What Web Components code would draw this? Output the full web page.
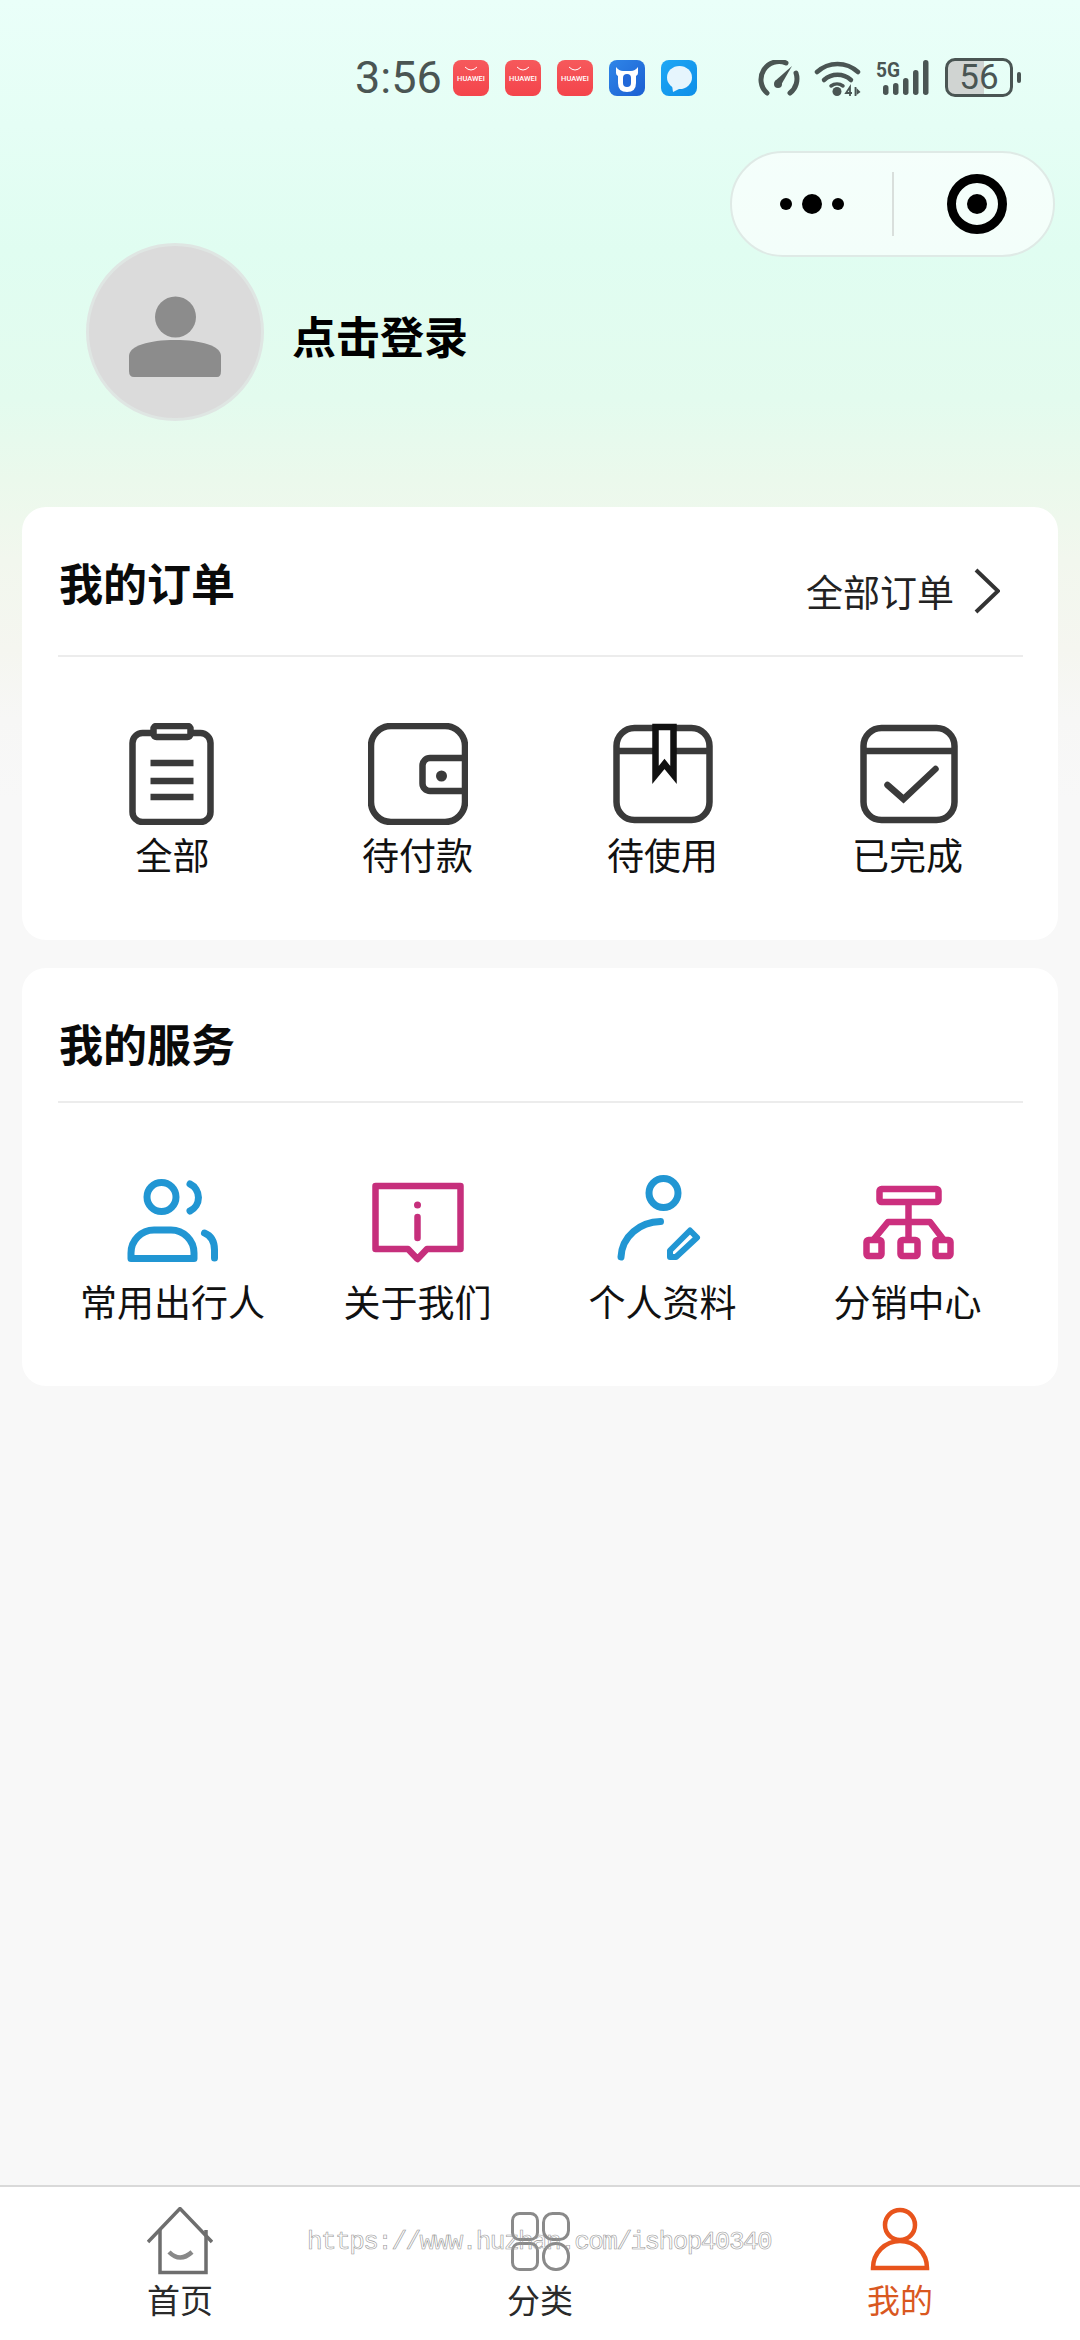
<!DOCTYPE html>
<html lang="zh">
<head>
<meta charset="utf-8">
<title>我的</title>
<style>
  html, body { margin: 0; padding: 0; }
  body {
    width: 1080px;
    height: 2340px;
    overflow: hidden;
    font-family: "Noto Sans CJK SC", "Noto Sans", sans-serif;
    color: #111;
    background: linear-gradient(180deg, #eafff9 0, #e0fdf1 250px, #e3fbee 400px, #ebf9ec 480px, #f2f7ee 560px, #f5f6f0 650px, #f7f7f6 720px, #f8f8f8 800px);
  }
</style>
</head>
<body>
<app-shell>
  <status-bar></status-bar>
  <nav-row></nav-row>
  <user-head>点击登录</user-head>

  <panel-card style="--head-h:150px;--card-h:433px;--pad-top:66px;--icon-h:102px;--label-gap:7px;margin-bottom:28px">
    <span slot="title">我的订单</span>
    <more-link slot="action">全部订单</more-link>
    <grid-item label="全部">
      <svg width="100" height="102" viewBox="0 0 100 102" fill="none" stroke="#3a3a3a" stroke-width="6.500">
        <rect x="9.500" y="10" width="78" height="89" rx="10"/>
        <rect x="30.500" y="3" width="37" height="11" rx="3" fill="#fff"/>
        <path d="M27.500 40h43M27.500 58h43M27.500 74h43"/>
      </svg>
    </grid-item>
    <grid-item label="待付款">
      <svg width="100" height="102" viewBox="0 0 100 102" fill="none" stroke="#3a3a3a" stroke-width="6.500">
        <rect x="3" y="3" width="94" height="96" rx="20"/>
        <path d="M97 35H62a7.500 7.500 0 0 0-7.500 7.500v18a7.500 7.500 0 0 0 7.500 7.500H97"/>
        <circle cx="73.500" cy="53" r="5.500" fill="#3a3a3a" stroke="none"/>
      </svg>
    </grid-item>
    <grid-item label="待使用">
      <svg width="100" height="102" viewBox="0 0 100 102" fill="none" stroke="#3a3a3a" stroke-width="6.500">
        <rect x="3.500" y="5" width="93" height="92" rx="18"/>
        <path d="M4 28h92"/>
        <path d="M42.500 4v48l9-11 9 11V4z" fill="#fff" stroke="#111"/>
      </svg>
    </grid-item>
    <grid-item label="已完成">
      <svg width="100" height="102" viewBox="0 0 100 102" fill="none" stroke="#3a3a3a" stroke-width="6.500">
        <rect x="5.500" y="5" width="91" height="92" rx="18"/>
        <path d="M6 28h90"/>
        <path d="M29.500 62l16 14 32-30" stroke-linecap="round"/>
      </svg>
    </grid-item>
  </panel-card>

  <panel-card style="--head-h:135px;--card-h:418px;--pad-top:72px;--icon-h:90px;--label-gap:14px">
    <span slot="title">我的服务</span>
    <grid-item label="常用出行人">
      <svg width="100" height="90" viewBox="0 0 100 90" fill="none" stroke="#2196d3" stroke-width="7" stroke-linecap="round" stroke-linejoin="round">
        <circle cx="38.500" cy="22" r="14.500"/>
        <path d="M67 9a15 15 0 0 1 0 27"/>
        <path d="M8 83.500V78a23 23 0 0 1 23-23h17a23 23 0 0 1 23 23v5.500z"/>
        <path d="M81.500 58q10 4 10 17v8"/>
      </svg>
    </grid-item>
    <grid-item label="关于我们">
      <svg width="100" height="90" viewBox="0 0 100 90" fill="none" stroke="#c62f7c" stroke-width="6.500" stroke-linejoin="round">
        <path d="M7.500 11h85v63H59l-9.500 10L40 74H7.500z"/>
        <circle cx="49.500" cy="30" r="3.500" fill="#c62f7c" stroke="none"/>
        <path d="M49.500 42v21" stroke-linecap="round"/>
      </svg>
    </grid-item>
    <grid-item label="个人资料">
      <svg width="100" height="90" viewBox="0 0 100 90" fill="none" stroke="#2196d3" stroke-width="7" stroke-linecap="round" stroke-linejoin="round">
        <circle cx="50.500" cy="18" r="14.500"/>
        <path d="M47.500 46.500C27 47 9 61 8 82"/>
        <path d="M77 55.500l7 7L63 82h-6v-6.500z" stroke-width="6"/>
      </svg>
    </grid-item>
    <grid-item label="分销中心">
      <svg width="100" height="90" viewBox="0 0 100 90" fill="none" stroke="#cc2f7e" stroke-width="6.500" stroke-linejoin="round">
        <rect x="21.500" y="14" width="59" height="13" rx="2"/>
        <path d="M50.500 30v32"/>
        <path d="M16 64l14-17h42l13 17"/>
        <rect x="8.500" y="65" width="15" height="16" rx="2"/>
        <rect x="42.500" y="65" width="17" height="16" rx="2"/>
        <rect x="77.500" y="65" width="15" height="16" rx="2"/>
      </svg>
    </grid-item>
  </panel-card>

  <tab-bar slot="tabs">
    <tab-item label="首页">
      <svg width="66" height="68" viewBox="0 0 66 68" fill="none" stroke="#6e6e6e" stroke-width="3.500">
        <path d="M1 35L33 1.500 65 35"/>
        <path d="M13 23v42.500h46V23"/>
        <path d="M22 45q11 11 23 0" stroke="#888" stroke-width="4.500"/>
      </svg>
    </tab-item>
    <tab-item label="分类">
      <svg width="66" height="68" viewBox="0 0 66 68" fill="none" stroke="#8a8a8a" stroke-width="3">
        <rect x="5.500" y="6.500" width="25" height="26" rx="7"/>
        <rect x="36.500" y="6.500" width="25" height="26" rx="9"/>
        <rect x="5.500" y="36.500" width="25" height="26" rx="7"/>
        <rect x="36.500" y="36.500" width="25" height="26" rx="12"/>
      </svg>
    </tab-item>
    <tab-item label="我的" active>
      <svg width="66" height="68" viewBox="0 0 66 68" fill="none" stroke="#e8541c" stroke-width="4.500">
        <circle cx="33" cy="18" r="15"/>
        <path d="M6 61a27 27 0 0 1 54 0z"/>
      </svg>
    </tab-item>
  </tab-bar>
</app-shell>

<script>
class AppShell extends HTMLElement {
  constructor() {
    super();
    this.attachShadow({ mode: "open" }).innerHTML = `
      <style>
        :host { display: flex; flex-direction: column; height: 2340px; }
        .body { flex: 1; }
      </style>
      <div class="body"><slot></slot></div>
      <slot name="tabs"></slot>
    `;
  }
}

class StatusBar extends HTMLElement {
  constructor() {
    super();
    const huawei = `
      <div class="app red">
        <svg width="36" height="13" viewBox="0 0 36 13" fill="none" stroke="#fff" stroke-width="1"><path d="M12 7q6 6 12 0"/></svg>
        <span>HUAWEI</span>
      </div>`;
    this.attachShadow({ mode: "open" }).innerHTML = `
      <style>
        :host {
          display: flex; align-items: center; height: 39px;
          padding: 58px 0 0 355px; color: #4a5553;
        }
        .time { font: 400 45px/39px Roboto, sans-serif; width: 98px; }
        .apps { display: flex; gap: 16px; width: 305px; }
        .app {
          width: 36px; height: 36px; border-radius: 8px;
          display: flex; flex-direction: column; align-items: center;
        }
        .app svg { display: block; flex: none; }
        .red { background: linear-gradient(180deg, #f6595c, #f4444b); color: #fff; }
        .red span { font: 500 7.500px/12px Roboto, sans-serif; white-space: nowrap; }
        .blue { background: linear-gradient(135deg, #2f86e8, #1b5fd2); }
        .sky { background: linear-gradient(135deg, #1ea7f5, #0e8ee8); }
        .sys { display: flex; align-items: center; }
        svg { display: block; }
        .battery {
          width: 62px; height: 33px; border: 3px solid #4a5553; border-radius: 10px;
          margin-left: 16px; text-align: center;
          font: 400 35px/33px Roboto, sans-serif;
          background: linear-gradient(90deg, #d0d4d2 58%, transparent 58%);
        }
        .tip { width: 4px; height: 11px; border-radius: 2px; background: #4a5553; margin-left: 4px; }
      </style>
      <div class="time">3:56</div>
      <div class="apps">
        ${huawei}${huawei}${huawei}
        <div class="app blue">
          <svg width="36" height="36" viewBox="0 0 36 36">
            <path d="M7 7q3 4 7 4h8q4 0 7-4v6q0 2-2 3v7q0 9-9 9t-9-9v-7q-2-1-2-3z" fill="#fff"/>
            <rect x="14" y="14" width="8" height="13" rx="4" fill="#2268d8"/>
          </svg>
        </div>
        <div class="app sky">
          <svg width="36" height="36" viewBox="0 0 36 36">
            <ellipse cx="18.500" cy="17.500" rx="12.500" ry="11.500" fill="#e6f5fd"/>
            <path d="M11 25l1 7 8-4z" fill="#e6f5fd"/>
          </svg>
        </div>
      </div>
      <div class="sys">
        <svg width="42" height="36" viewBox="0 0 42 36" fill="none" stroke="#4a5553" stroke-width="5" stroke-linecap="round">
          <path d="M9 33A18 18 0 0 1 28 3"/>
          <path d="M38 13a18 18 0 0 1-6 20"/>
          <path d="M34 6L23 25l-6-4z" fill="#4a5553" stroke="none"/>
          <circle cx="20" cy="24" r="4" fill="#4a5553" stroke="none"/>
        </svg>
        <svg style="margin-left:14px" width="47" height="36" viewBox="0 0 47 36" fill="none" stroke="#4a5553" stroke-width="4.500" stroke-linecap="round">
          <path d="M3 12a30 30 0 0 1 41 0"/>
          <path d="M10 20a20 20 0 0 1 27 0"/>
          <path d="M17 26a10 10 0 0 1 12 0" stroke-width="3.500"/>
          <circle cx="23" cy="31.500" r="4.500" fill="#4a5553" stroke="none"/>
          <path d="M36 36v-9l-4 6h6" stroke-width="1.800" stroke-linecap="butt"/>
          <path d="M41.500 27v9" stroke-width="1.800" stroke-linecap="butt"/>
          <path d="M42.500 28l4 4-4 3z" fill="#4a5553" stroke="none"/>
        </svg>
        <svg style="margin-left:14px" width="54" height="37" viewBox="0 0 54 37">
          <text x="1" y="18" font-family="Roboto, sans-serif" font-size="21" font-weight="700" textLength="24" lengthAdjust="spacingAndGlyphs" fill="#4a5553">5G</text>
          <g fill="#4a5553">
            <rect x="8" y="26" width="5.500" height="10" rx="2.700"/>
            <rect x="18" y="24" width="5.500" height="12" rx="2.700"/>
            <rect x="28" y="19" width="5.500" height="17" rx="2.700"/>
            <rect x="38" y="11" width="5.500" height="25" rx="2.700"/>
            <rect x="48" y="1" width="5.500" height="35" rx="2.700"/>
          </g>
        </svg>
        <div class="battery">56</div>
        <div class="tip"></div>
      </div>
    `;
  }
}

class NavRow extends HTMLElement {
  constructor() {
    super();
    this.attachShadow({ mode: "open" }).innerHTML = `
      <style>
        :host { display: flex; justify-content: flex-end; height: 92px; padding: 54px 25px 0 0; }
        .pill {
          box-sizing: border-box; width: 325px; height: 106px; border-radius: 53px;
          background: rgba(255, 255, 255, .62); border: 2px solid #dfeae6;
          display: flex; align-items: center;
        }
        .dots { width: 160px; display: flex; justify-content: center; align-items: center; gap: 10px; }
        .dots i { display: block; width: 12px; height: 12px; border-radius: 50%; background: #000; }
        .dots i.big { width: 20px; height: 20px; }
        .line { width: 2px; height: 64px; background: #d9dfdc; }
        .target { flex: 1; display: flex; justify-content: center; padding-left: 6px; }
        svg { display: block; }
      </style>
      <div class="pill">
        <div class="dots"><i></i><i class="big"></i><i></i></div>
        <div class="line"></div>
        <div class="target">
          <svg width="60" height="60" viewBox="0 0 60 60">
            <circle cx="30" cy="30" r="25.500" fill="none" stroke="#000" stroke-width="9"/>
            <circle cx="30" cy="30" r="10" fill="#000"/>
          </svg>
        </div>
      </div>
    `;
  }
}

class UserHead extends HTMLElement {
  constructor() {
    super();
    this.attachShadow({ mode: "open" }).innerHTML = `
      <style>
        :host { display: flex; align-items: center; gap: 28px; padding: 0 0 86px 86px; }
        .avatar { display: block; flex: none; }
        .name { font-size: 44px; line-height: 60px; font-weight: 700; color: #000; margin-top: 5px; }
      </style>
      <svg class="avatar" width="178" height="178" viewBox="0 0 178 178">
        <circle cx="89" cy="89" r="87.500" fill="#dbdbdb" stroke="#dfe6e3" stroke-width="3"/>
        <circle cx="89.500" cy="74" r="20.500" fill="#8c8c8c"/>
        <path d="M43 128q0 6 5 6h83q4 0 4-6v-15c0-10-20-16-46-16s-46 6-46 16z" fill="#8c8c8c"/>
      </svg>
      <div class="name"><slot></slot></div>
    `;
  }
}

class PanelCard extends HTMLElement {
  constructor() {
    super();
    this.attachShadow({ mode: "open" }).innerHTML = `
      <style>
        :host {
          display: block; box-sizing: border-box; height: var(--card-h);
          margin: 0 22px; background: #fff; border-radius: 24px;
        }
        .head {
          box-sizing: border-box; height: var(--head-h); margin: 0 35px 0 36px;
          padding: 45px 23px 0 1px; border-bottom: 2px solid #ececec;
          display: flex; justify-content: space-between; align-items: flex-start;
        }
        .title { font-size: 44px; line-height: 60px; font-weight: 700; color: #0a0a0a; }
        .grid {
          display: grid; grid-template-columns: repeat(4, 245px);
          padding: var(--pad-top) 28px 0;
        }
      </style>
      <div class="head">
        <div class="title"><slot name="title"></slot></div>
        <slot name="action"></slot>
      </div>
      <div class="grid"><slot></slot></div>
    `;
  }
}

class MoreLink extends HTMLElement {
  constructor() {
    super();
    this.attachShadow({ mode: "open" }).innerHTML = `
      <style>
        :host { display: flex; align-items: center; gap: 20px; margin-top: 14px; font-size: 37px; line-height: 50px; color: #222; }
        svg { display: block; }
      </style>
      <span><slot></slot></span>
      <svg width="26" height="46" viewBox="0 0 26 46" fill="none" stroke="#333" stroke-width="4">
        <path d="M2 2l22 21L2 44"/>
      </svg>
    `;
  }
}

class GridItem extends HTMLElement {
  constructor() {
    super();
    this.attachShadow({ mode: "open" }).innerHTML = `
      <style>
        :host { display: flex; flex-direction: column; align-items: center; }
        .icon { height: var(--icon-h); }
        .label { margin-top: var(--label-gap); font-size: 37px; line-height: 44px; color: #111; white-space: nowrap; }
      </style>
      <div class="icon"><slot></slot></div>
      <div class="label"></div>
    `;
    this.shadowRoot.querySelector(".label").textContent = this.getAttribute("label");
  }
}

class TabBar extends HTMLElement {
  constructor() {
    super();
    this.attachShadow({ mode: "open" }).innerHTML = `
      <style>
        :host {
          display: grid; grid-template-columns: repeat(3, 360px); position: relative;
          box-sizing: border-box; height: 155px; background: #fff;
          border-top: 2px solid #d9d9d9; padding-top: 20px;
        }
        .mark {
          position: absolute; left: 307px; top: 37px;
          font: 26px/36px "Liberation Mono", monospace; letter-spacing: -1.540px;
          color: transparent; -webkit-text-stroke: .6px #999; white-space: nowrap;
        }
      </style>
      <slot></slot>
      <div class="mark">https://www.huzhan.com/ishop40340</div>
    `;
  }
}

class TabItem extends HTMLElement {
  constructor() {
    super();
    this.attachShadow({ mode: "open" }).innerHTML = `
      <style>
        :host { display: flex; flex-direction: column; align-items: center; color: #2a2a2a; }
        :host([active]) { color: #d9581f; }
        .icon { height: 68px; }
        .label { margin-top: 2px; font-size: 33px; line-height: 44px; }
      </style>
      <div class="icon"><slot></slot></div>
      <div class="label"></div>
    `;
    this.shadowRoot.querySelector(".label").textContent = this.getAttribute("label");
  }
}

customElements.define("app-shell", AppShell);
customElements.define("status-bar", StatusBar);
customElements.define("nav-row", NavRow);
customElements.define("user-head", UserHead);
customElements.define("panel-card", PanelCard);
customElements.define("more-link", MoreLink);
customElements.define("grid-item", GridItem);
customElements.define("tab-bar", TabBar);
customElements.define("tab-item", TabItem);
</script>
</body>
</html>
